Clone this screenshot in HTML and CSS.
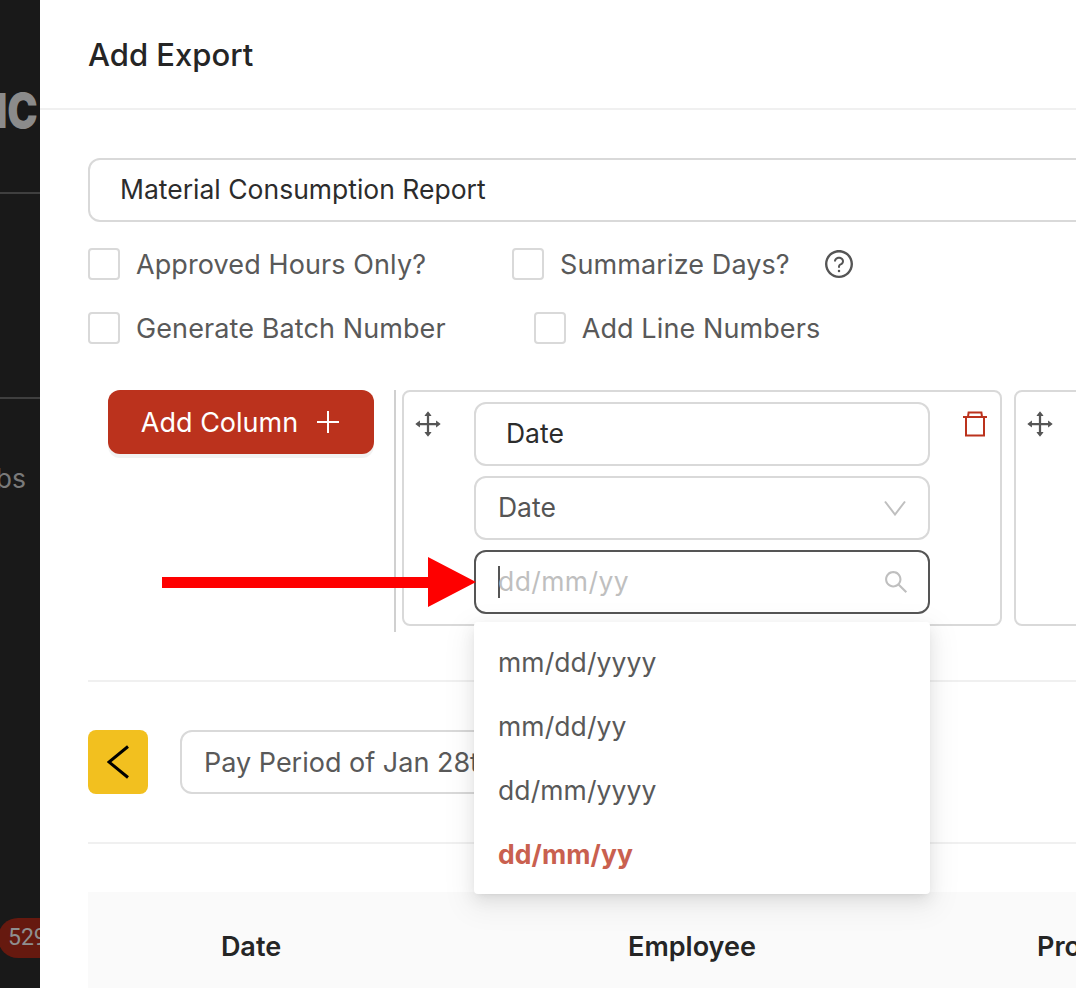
FILE: index.html
```html
<!DOCTYPE html>
<html lang="en">
<head>
<meta charset="utf-8">
<title>Add Export</title>
<link rel="stylesheet" href="styles.css">
</head>
<body>
<div class="page">
  <aside class="sidebar">
    <div class="logo">NIC</div>
    <div class="side-rule side-rule-first"></div>
    <div class="side-rule side-rule-second"></div>
    <div class="side-link">Jobs</div>
    <div class="side-badge">529</div>
  </aside>
  <main class="drawer">
    <header class="drawer-header"><h1 class="drawer-title">Add Export</h1></header>
    <div class="drawer-body">
      <div class="text-input name-input">Material Consumption Report</div>
      <div class="check-row">
        <label class="check"><span class="box"></span>Approved Hours Only?</label>
        <label class="check"><span class="box"></span>Summarize Days?</label>
        <svg class="help-icon" viewBox="0 0 1024 1024"><path d="M512 64C264.6 64 64 264.6 64 512s200.6 448 448 448 448-200.6 448-448S759.4 64 512 64zm0 820c-205.4 0-372-166.6-372-372s166.6-372 372-372 372 166.6 372 372-166.6 372-372 372z"/><path d="M623.6 316.7C593.6 290.4 554 276 512 276s-81.6 14.5-111.6 40.7C369.2 344 352 380.7 352 420v7.6c0 4.4 3.6 8 8 8h48c4.4 0 8-3.6 8-8V420c0-44.1 43.1-80 96-80s96 35.9 96 80c0 31.1-22 59.6-56.1 72.7-21.2 8.1-39.2 22.3-52.1 40.9-13.1 19-19.9 41.8-19.9 65.1V620c0 4.4 3.6 8 8 8h48c4.4 0 8-3.6 8-8v-22.7a48.3 48.3 0 0 1 30.9-44.8c59-22.7 97.1-74.7 97.1-132.5.1-39.3-17.1-76-48.3-103.3zM472 732a40 40 0 1 0 80 0 40 40 0 1 0-80 0z"/></svg>
      </div>
      <div class="check-row">
        <label class="check"><span class="box"></span>Generate Batch Number</label>
        <label class="check"><span class="box"></span>Add Line Numbers</label>
      </div>
      <section class="columns">
        <button class="add-column" type="button">Add Column<svg class="plus-icon" viewBox="0 0 22 22"><path d="M11 0v22M0 11h22"/></svg></button>
        <div class="column-list">
          <article class="column-card">
            <svg class="move-icon" viewBox="0 0 1024 1024"><path d="M909.3 506.3L781.7 405.6a7.23 7.23 0 0 0-11.7 5.7V476H548V254h64.8c6 0 9.4-7 5.7-11.7L517.7 114.7a7.14 7.14 0 0 0-11.3 0L405.6 242.3a7.23 7.23 0 0 0 5.7 11.7H476v222H254v-64.8c0-6-7-9.4-11.7-5.7L114.7 506.3a7.14 7.14 0 0 0 0 11.3l127.5 100.8c4.7 3.7 11.7.4 11.7-5.7V548h222v222h-64.8c-6 0-9.4 7-5.7 11.7l100.8 127.5c2.9 3.7 8.5 3.7 11.3 0l100.8-127.5c3.7-4.7.4-11.7-5.7-11.7H548V548h222v64.8c0 6 7 9.4 11.7 5.7l127.5-100.8a7.3 7.3 0 0 0 .1-11.4z"/></svg>
            <div class="fields">
              <div class="field field-name"><span class="field-text">Date</span></div>
              <div class="field field-select"><span class="field-text">Date</span><svg class="chevron-icon" viewBox="0 0 22 16"><path d="M1 1.5l10 13 10-13"/></svg></div>
              <div class="field field-search">
                <span class="caret"></span><span class="placeholder">dd/mm/yy</span>
                <svg class="search-icon" viewBox="0 0 1024 1024"><path d="M909.6 854.5L649.9 594.8C690.2 542.7 712 479 712 412c0-80.2-31.3-155.4-87.9-212.1-56.6-56.7-132-87.9-212.1-87.9s-155.5 31.3-212.1 87.9C143.2 256.5 112 331.8 112 412c0 80.1 31.3 155.5 87.9 212.1C256.5 680.8 331.8 712 412 712c67 0 130.6-21.9 182.7-62l259.7 259.6a8.2 8.2 0 0 0 11.6 0l43.6-43.5a8.2 8.2 0 0 0 0-11.6zM570.4 570.4C528 612.7 471.8 636 412 636s-116-23.3-158.4-65.6C211.3 528 188 471.8 188 412s23.3-116.1 65.6-158.4C296 211.3 352.2 188 412 188s116.1 23.2 158.4 65.6S636 352.2 636 412s-23.3 116.1-65.6 158.4z"/></svg>
                <ul class="menu">
                  <li class="menu-item">mm/dd/yyyy</li>
                  <li class="menu-item">mm/dd/yy</li>
                  <li class="menu-item">dd/mm/yyyy</li>
                  <li class="menu-item menu-item-active">dd/mm/yy</li>
                </ul>
              </div>
            </div>
            <svg class="trash-icon" viewBox="0 0 24 26"><path d="M0 6h24M5 6l.6-4.6h12.8L19 6M3 6v18.6h18V6"/></svg>
          </article>
          <article class="column-card">
            <svg class="move-icon" viewBox="0 0 1024 1024"><path d="M909.3 506.3L781.7 405.6a7.23 7.23 0 0 0-11.7 5.7V476H548V254h64.8c6 0 9.4-7 5.7-11.7L517.7 114.7a7.14 7.14 0 0 0-11.3 0L405.6 242.3a7.23 7.23 0 0 0 5.7 11.7H476v222H254v-64.8c0-6-7-9.4-11.7-5.7L114.7 506.3a7.14 7.14 0 0 0 0 11.3l127.5 100.8c4.7 3.7 11.7.4 11.7-5.7V548h222v222h-64.8c-6 0-9.4 7-5.7 11.7l100.8 127.5c2.9 3.7 8.5 3.7 11.3 0l100.8-127.5c3.7-4.7.4-11.7-5.7-11.7H548V548h222v64.8c0 6 7 9.4 11.7 5.7l127.5-100.8a7.3 7.3 0 0 0 .1-11.4z"/></svg>
          </article>
        </div>
      </section>
      <hr class="rule">
      <div class="period-row">
        <button class="prev-button" type="button"><svg class="prev-icon" viewBox="0 0 22 34"><path d="M21 1.5L2 17l19 15.5"/></svg></button>
        <div class="text-input period-select">Pay Period of Jan 28th</div>
      </div>
      <hr class="rule">
      <div class="table-head">
        <div class="th">Date</div>
        <div class="th">Employee</div>
        <div class="th th-project">Project</div>
      </div>
    </div>
  </main>
  <svg class="annotation-arrow" viewBox="0 0 314 50"><path d="M0 20h266V0l48 25-48 25V31H0z"/></svg>
</div>
</body>
</html>
```
FILE: styles.css
```css
* { box-sizing: border-box; }
html, body { margin: 0; height: 100%; overflow: hidden; background: #fff; }
body { font-family: Inter, "Liberation Sans", sans-serif; font-size: 26.5px; color: #555; }

.page { position: relative; display: flex; width: 1076px; height: 988px; overflow: hidden; }

.sidebar { flex: 0 0 40px; width: 40px; display: flex; flex-direction: column; overflow: hidden; background: #191919; color: #808080; }
.logo { align-self: flex-end; margin: 87px 2px 0 0; font-size: 48px; line-height: 48px; font-weight: 900; color: #8b8b8b; white-space: nowrap; transform: scaleX(.85); transform-origin: right center; }
.side-rule { flex: none; width: 100%; height: 2px; background: #3f3f3f; }
.side-rule-first { margin-top: 57px; }
.side-rule-second { margin-top: 203px; }
.side-link { align-self: flex-end; margin: 62px 14px 0 0; line-height: 34px; color: #7a7a7a; white-space: nowrap; }
.side-badge { align-self: flex-start; margin: 423px 0 0 -2px; width: 60px; height: 40px; padding-left: 10px; border-radius: 20px; background: #66190f; font-family: Roboto, Inter, sans-serif; font-size: 23px; line-height: 40px; color: #8f8f8f; }

.drawer { flex: 1 1 auto; min-width: 0; overflow: hidden; background: #fff; }
.drawer-header { height: 110px; padding: 36px 48px 0; border-bottom: 2px solid #f0f0f0; }
.drawer-title { margin: 0; font-size: 31px; line-height: 38px; font-weight: 500; color: #252525; }
.drawer-body { width: 1200px; padding: 48px 48px 0; }

.text-input { height: 64px; border: 2px solid #d9d9d9; border-radius: 12px; line-height: 60px; }
.name-input { width: 1100px; padding-left: 30px; line-height: 59px; color: #2c2c2c; }

.check-row { display: flex; align-items: center; height: 32px; margin-top: 26px; gap: 86px; }
.check-row + .check-row { margin-top: 32px; gap: 88px; }
.check { display: flex; align-items: center; gap: 16px; font-size: 27px; letter-spacing: .1px; color: #595959; white-space: nowrap; }
.box { display: block; width: 32px; height: 32px; border: 2px solid #d9d9d9; border-radius: 4px; background: #fff; }
.help-icon { width: 32px; height: 32px; margin-left: -53px; fill: #555; }

.columns { display: flex; align-items: flex-start; height: 242px; margin: 46px 0 48px 20px; }
.add-column { display: flex; align-items: center; justify-content: center; gap: 19px; flex: none; width: 266px; height: 64px; padding: 0 2px 0 0; border: 0; border-radius: 12px; background: #bb321d; box-shadow: 0 4px 0 rgba(0,0,0,.05); font-family: inherit; font-size: 27px; color: #fff; }
.plus-icon { width: 22px; height: 22px; fill: none; stroke: #fff; stroke-width: 2; }
.column-list { display: flex; gap: 12px; flex: none; height: 242px; margin-left: 20px; padding-left: 6px; border-left: 2px solid #d0d0d0; }
.column-card { display: flex; align-items: flex-start; flex: none; width: 600px; height: 236px; padding: 10px 0 0 8px; border: 2px solid #d9d9d9; border-radius: 8px; background: #fff; }
.move-icon { flex: none; width: 32px; height: 32px; margin-top: 6px; fill: #555; }
.fields { display: flex; flex-direction: column; gap: 10px; flex: none; width: 456px; margin-left: 30px; }
.field { position: relative; display: flex; align-items: center; justify-content: space-between; height: 64px; padding: 0 22px; border: 2px solid #d9d9d9; border-radius: 12px; background: #fff; }
.field-text { margin-top: -2px; }
.field-name { padding-left: 30px; color: #2c2c2c; }
.chevron-icon { width: 22px; height: 16px; fill: none; stroke: #bfbfbf; stroke-width: 2; }
.field-search { border-color: #555; justify-content: flex-start; padding-left: 22px; }
.caret { flex: none; width: 2px; height: 32px; background: #555; }
.placeholder { margin: -2px 0 0 -2px; letter-spacing: .4px; color: #bfbfbf; }
.search-icon { width: 28px; height: 28px; margin-left: auto; margin-right: -4px; fill: #bfbfbf; }
.trash-icon { flex: none; width: 24px; height: 26px; margin: 9px 0 0 33px; fill: none; stroke: #bb321d; stroke-width: 2; }

.menu { position: absolute; z-index: 5; top: 70px; left: -2px; width: 456px; margin: 0; padding: 8px 0; list-style: none; border-radius: 4px; background: #fff; box-shadow: 0 6px 16px rgba(0,0,0,.08), 0 3px 6px -4px rgba(0,0,0,.12), 0 9px 28px 8px rgba(0,0,0,.05); }
.menu-item { height: 64px; padding: 0 24px; line-height: 65px; letter-spacing: .1px; color: #595959; }
.menu-item-active { font-weight: 700; color: #c9604f; }

.rule { height: 2px; margin: 0; border: 0; background: #f0f0f0; }

.period-row { display: flex; gap: 32px; margin: 48px 0; }
.prev-button { display: flex; align-items: center; justify-content: center; flex: none; width: 60px; height: 64px; padding: 0; border: 0; border-radius: 8px; background: #f2c01f; }
.prev-icon { width: 22px; height: 34px; fill: none; stroke: #000; stroke-width: 3; }
.period-select { width: 520px; padding-left: 22px; font-size: 27px; line-height: 62px; color: #595959; }

.table-head { display: grid; grid-template-columns: 326px 556px 1fr; align-items: center; height: 96px; margin-top: 48px; padding-top: 12px; background: #fafafa; font-size: 27px; font-weight: 600; color: #252525; }
.th { text-align: center; }
.th-project { padding-left: 67px; text-align: left; }

.annotation-arrow { position: absolute; z-index: 10; left: 162px; top: 557px; width: 314px; height: 50px; fill: #fe0000; }
```
